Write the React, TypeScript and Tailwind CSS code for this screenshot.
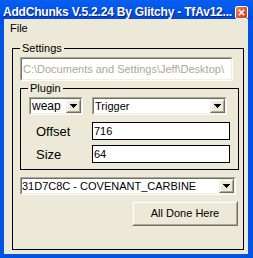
import React from "react";

const FONT = "font-['Liberation_Sans',Arial,sans-serif]";

function Arrow() {
  return (
    <svg width="7" height="4" viewBox="0 0 7 4" shapeRendering="crispEdges">
      <rect x="0" y="0" width="7" height="1" fill="#000" />
      <rect x="1" y="1" width="5" height="1" fill="#000" />
      <rect x="2" y="2" width="3" height="1" fill="#000" />
      <rect x="3" y="3" width="1" height="1" fill="#000" />
    </svg>
  );
}

function DropButton() {
  return (
    <div className="w-[15px] h-full border border-t-[#f1efe2] border-l-[#f1efe2] border-r-[#716f64] border-b-[#716f64]">
      <div className="w-full h-full bg-[#ece9d8] border border-t-white border-l-white border-r-[#aca899] border-b-[#aca899] flex items-center justify-center">
        <Arrow />
      </div>
    </div>
  );
}

function Sunken({ className, children }: { className: string; children: React.ReactNode }) {
  return (
    <div className={`${className} border border-t-[#aca899] border-l-[#aca899] border-r-white border-b-white`}>
      <div className="w-full h-full bg-white border border-t-[#716f64] border-l-[#716f64] border-r-[#f1efe2] border-b-[#f1efe2] flex items-center">
        {children}
      </div>
    </div>
  );
}

function Combo({ className, text, textClass }: { className: string; text: string; textClass: string }) {
  return (
    <Sunken className={className}>
      <span className={`flex-1 ${textClass} leading-none text-black whitespace-nowrap overflow-hidden`}>{text}</span>
      <DropButton />
    </Sunken>
  );
}

function TextBox({ value }: { value: string }) {
  return (
    <div className="w-[138px] h-[18px] bg-white border border-black flex items-center pl-[1px]">
      <span className="text-[11px] leading-none text-black">{value}</span>
    </div>
  );
}

export default function App() {
  return (
    <div className={`w-[253px] h-[258px] bg-[#0054e3] flex flex-col overflow-hidden ${FONT}`}>
      {/* Title bar */}
      <div className="h-[19px] flex items-start bg-[linear-gradient(to_bottom,#0a5ef0_0%,#0058ee_40%,#0054e3_70%,#0049d6_100%)]">
        <div className="pl-[3px] pt-[5px] text-[12px] leading-[14px] font-bold text-white tracking-[-0.2px] whitespace-nowrap [text-shadow:1px_1px_0_#0a1c8a]">
          AddChunks V.5.2.24 By Glitchy - TfAv12...
        </div>
        <div className="ml-auto mr-[5px] mt-[6px] w-[13px] h-[13px] rounded-[2px] border border-white bg-[linear-gradient(135deg,#ec8f6b_0%,#e0582e_50%,#c2401c_100%)] flex items-center justify-center">
          <svg width="7" height="7" viewBox="0 0 7 7">
            <path d="M0.8 0.8L6.2 6.2M6.2 0.8L0.8 6.2" stroke="#fff" strokeWidth="1.6" />
          </svg>
        </div>
      </div>

      {/* Client */}
      <div className="flex-1 ml-[4px] mr-[5px] mb-[4px] bg-[#ece9d8] flex flex-col">
        {/* Menu */}
        <div className="h-[19px] pl-[6px] flex items-center text-[11px] text-black">File</div>

        {/* Settings group */}
        <fieldset className="ml-[8px] mt-[4px] w-[232px] border border-black">
          <legend className="ml-[7px] px-[2px] text-[11px] leading-[13px] text-black">Settings</legend>
          <div className="pl-[7px] pt-[2px] pb-[23px] flex flex-col">
            <Sunken className="w-[213px] h-[24px]">
              <span className="pl-[1px] text-[11px] leading-none text-[#aca899] whitespace-nowrap">
                C:\Documents and Settings\Jeff\Desktop\
              </span>
            </Sunken>

            {/* Plugin group */}
            <fieldset className="mt-[1px] w-[219px] border border-black">
              <legend className="ml-[7px] px-[2px] text-[11px] leading-[13px] text-black">Plugin</legend>
              <div className="pl-[8px] pt-[2px] pb-[6px] flex flex-col">
                <div className="flex gap-[9px]">
                  <Combo className="w-[54px] h-[18px]" text="weap" textClass="text-[12px] pl-[1px]" />
                  <Combo className="w-[135px] h-[18px]" text="Trigger" textClass="text-[11px] pl-[1px]" />
                </div>
                <div className="mt-[7px] flex items-center">
                  <div className="w-[63px] pl-[7px] text-[13px] leading-none text-black">Offset</div>
                  <TextBox value="716" />
                </div>
                <div className="mt-[5px] flex items-center">
                  <div className="w-[63px] pl-[7px] text-[13px] leading-none text-black">Size</div>
                  <TextBox value="64" />
                </div>
              </div>
            </fieldset>

            <Combo className="mt-[7px] w-[216px] h-[18px]" text="31D7C8C - COVENANT_CARBINE" textClass="text-[11px]" />

            <div className="mt-[6px] ml-[112px] w-[106px] h-[25px] border border-t-[#f1efe2] border-l-[#f1efe2] border-r-[#716f64] border-b-[#716f64]">
              <div className="w-full h-full bg-[#ece9d8] border border-t-white border-l-white border-r-[#aca899] border-b-[#aca899] flex items-center justify-center text-[11px] text-black">
                All Done Here
              </div>
            </div>
          </div>
        </fieldset>
      </div>
    </div>
  );
}
